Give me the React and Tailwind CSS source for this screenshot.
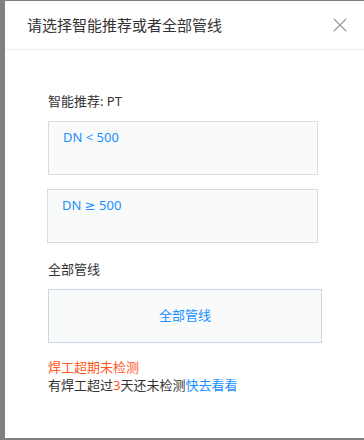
import { X } from "lucide-react";

const font = { fontFamily: '"Noto Sans", "Noto Sans CJK SC", sans-serif' };

export default function App() {
  return (
    <div className="h-[440px] w-[364px] bg-[#808080] pt-px pl-[5px] overflow-hidden" style={font}>
      <div className="h-[437px] bg-white flex flex-col">
        <div className="h-[49px] shrink-0 flex items-center justify-between pl-[22px] pr-[12px] border-b border-[#ececec]">
          <span className="text-[15px] text-[#333]">请选择智能推荐或者全部管线</span>
          <X className="w-[24px] h-[24px] text-[#999]" strokeWidth={1.1} />
        </div>
        <div className="pl-[43px] pt-[42px] flex flex-col">
          <div className="text-[13px] leading-[18px] text-[#333]">智能推荐: PT</div>
          <div className="mt-[11px] w-[270px] h-[54px] border border-[#dcdcdc] bg-[#f9fafa] pl-[14px] pt-[6px] text-[13px] text-[#1890ff]">
            DN &lt; 500
          </div>
          <div className="mt-[14px] -ml-px w-[271px] h-[54px] border border-[#dcdcdc] bg-[#f9fafa] pl-[14px] pt-[6px] text-[13px] text-[#1890ff]">
            DN <span className="font-['DejaVu_Sans']">≥</span> 500
          </div>
          <div className="mt-[17px] text-[13px] leading-[18px] text-[#333]">全部管线</div>
          <div className="mt-[11px] w-[274px] h-[54px] border border-[#c9d6e3] bg-[#f9fafa] flex items-center justify-center text-[13px] text-[#1890ff]">
            全部管线
          </div>
          <div className="mt-[15px] text-[13px] leading-[18px] text-[#ff5722]">焊工超期未检测</div>
          <div className="text-[13px] leading-[18px] text-[#333]">
            有焊工超过<span className="text-[#ff5722]">3</span>天还未检测<span className="text-[#1890ff]">快去看看</span>
          </div>
        </div>
      </div>
    </div>
  );
}
